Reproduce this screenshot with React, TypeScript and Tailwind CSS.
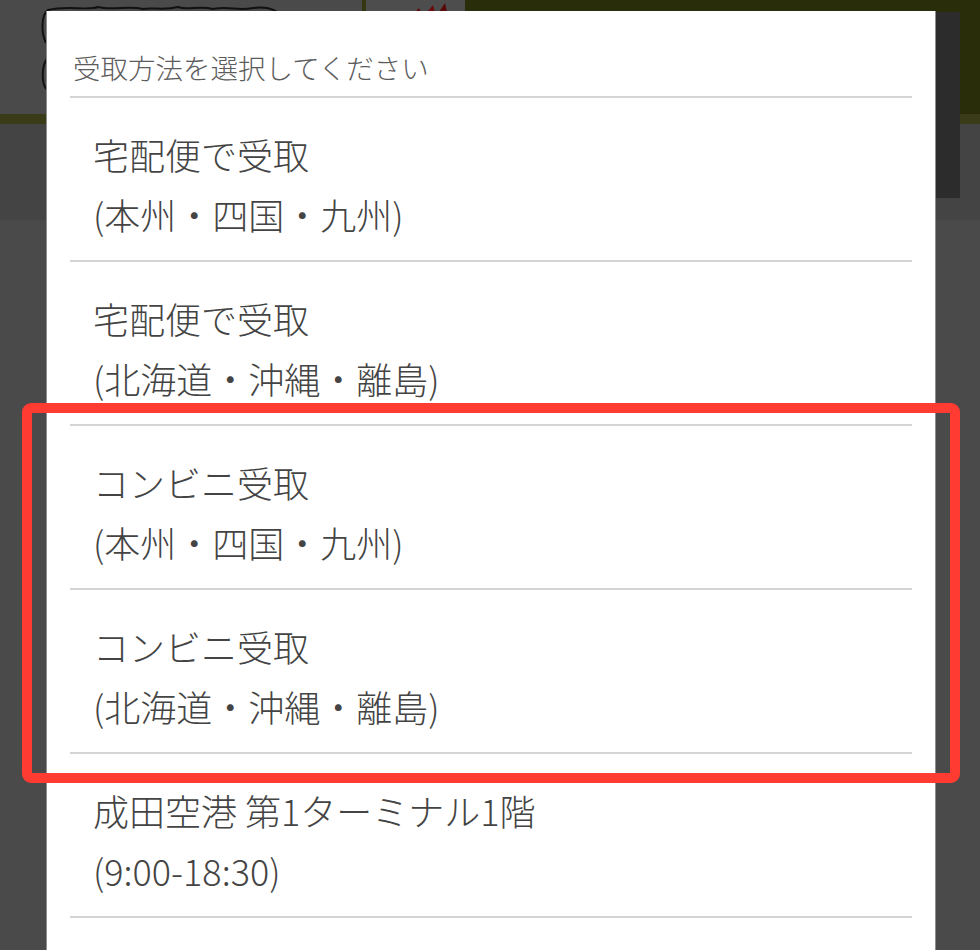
import React from "react";

const items: [string, string][] = [
  ["宅配便で受取", "(本州・四国・九州)"],
  ["宅配便で受取", "(北海道・沖縄・離島)"],
  ["コンビニ受取", "(本州・四国・九州)"],
  ["コンビニ受取", "(北海道・沖縄・離島)"],
  ["成田空港 第1ターミナル1階", "(9:00-18:30)"],
];

export default function App() {
  return (
    <div
      className="relative w-[980px] h-[950px] overflow-hidden bg-[#4a4a4a]"
      style={{ fontFamily: '"Noto Sans CJK JP", "Noto Sans", sans-serif' }}
    >
      {/* dimmed page behind the dialog */}
      <div className="flex flex-col">
        <div className="flex h-[114px]">
          <div className="relative w-[362px] bg-[#4a4a4a]">
            <svg
              className="absolute left-[38px] top-[3px]"
              width="250"
              height="90"
              viewBox="0 0 250 90"
              fill="none"
              stroke="#111"
              strokeWidth="2"
            >
              <path d="M8 40 C3 30 3 12 10 7 C30 2 50 8 60 4 C75 8 90 2 105 6 C115 4 125 8 140 4 C150 8 160 2 175 6 C190 3 200 8 215 5 C230 3 240 8 245 14" />
              <path d="M9 56 C4 62 3 78 8 86" />
            </svg>
          </div>
          <div className="w-[4px] bg-[#34370f]" />
          <div className="relative w-[99px] bg-[#4d4d4d]">
            <svg className="absolute left-[45px] top-[2px]" width="50" height="12" viewBox="0 0 50 12">
              <path d="M4 10 L8 6 L10 10 Z" fill="#5a0d0d" />
              <path d="M16 10 L22 3 L24 10 Z" fill="#6a0f0f" />
              <path d="M28 10 L34 1 L36 10 Z" fill="#5a0909" />
            </svg>
          </div>
          <div className="flex-1 bg-[#2a2d0a]" />
        </div>
        <div className="h-[10px] bg-[#3a3c17]" />
        <div className="h-[96px] bg-[#444444]" />
        <div className="flex-1 bg-[#4a4a4a]" />
      </div>

      {/* dark strip at the right */}
      <div className="absolute left-[935px] top-[12px] w-[25px] h-[186px] bg-[#2c2c2c]" />

      {/* dialog */}
      <div className="absolute left-[46px] top-[11px] w-[890px] bottom-0 bg-white border-x border-[#8e8e8e]">
        <div className="mx-[23px]">
          <div className="pt-[42px] pb-[15px] pl-[3px] text-[27.5px] leading-[28px] font-light text-[#5c5c5c]">
            受取方法を選択してください
          </div>
          {items.map(([a, b], i) => (
            <div
              key={i}
              className="border-t-2 border-[#d4d4d4] pl-[23px] pt-[26px] pb-[16px] text-[36px] leading-[60px] font-light text-[#444444]"
            >
              <div>{a}</div>
              <div>{b}</div>
            </div>
          ))}
          <div className="border-t-2 border-[#d4d4d4]" />
        </div>
      </div>

      {/* red annotation */}
      <div className="absolute left-[22px] top-[403px] w-[938px] h-[380px] border-[10px] border-[#ff3b32] rounded-[9px]" />
    </div>
  );
}
